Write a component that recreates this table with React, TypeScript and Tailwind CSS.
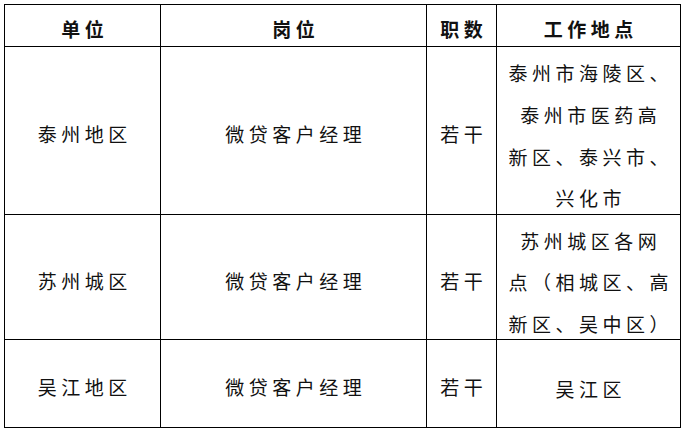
import React from 'react';

interface Row {
  unit: string;
  post: string;
  count: string;
  places: string[];
  height: string;
}

const rows: Row[] = [
  {
    unit: '泰州地区',
    post: '微贷客户经理',
    count: '若干',
    places: ['泰州市海陵区、', '泰州市医药高', '新区、泰兴市、', '兴化市'],
    height: 'h-[168px]',
  },
  {
    unit: '苏州城区',
    post: '微贷客户经理',
    count: '若干',
    places: ['苏州城区各网', '点（相城区、高', '新区、吴中区）'],
    height: 'h-[125px]',
  },
  {
    unit: '吴江地区',
    post: '微贷客户经理',
    count: '若干',
    places: ['吴江区'],
    height: 'h-[88px]',
  },
];

const cell = 'flex items-center justify-center border-r border-b border-black';

const App: React.FC = () => {
  return (
    <div className="min-h-screen bg-white pl-[4px] pt-[4px] text-[#111] [font-family:'Noto_Sans_CJK_SC',sans-serif]">
      <div className="grid w-[677px] grid-cols-[156px_266px_70px_184px] border-l border-t border-black text-[19px] tracking-[4.5px]">
        {/* Header */}
        <div className={`${cell} h-[42px] font-bold`}>
          <span className="translate-y-1 pl-[4.5px]">单位</span>
        </div>
        <div className={`${cell} h-[42px] font-bold`}>
          <span className="translate-y-1 pl-[4.5px]">岗位</span>
        </div>
        <div className={`${cell} h-[42px] font-bold`}>
          <span className="translate-y-1 pl-[4.5px]">职数</span>
        </div>
        <div className={`${cell} h-[42px] font-bold`}>
          <span className="translate-y-1 pl-[4.5px]">工作地点</span>
        </div>

        {rows.map((row) => (
          <React.Fragment key={row.unit}>
            <div className={`${cell} ${row.height}`}>
              <span className="translate-y-1 pl-[4.5px]">{row.unit}</span>
            </div>
            <div className={`${cell} ${row.height}`}>
              <span className="translate-y-1 pl-[4.5px]">{row.post}</span>
            </div>
            <div className={`${cell} ${row.height}`}>
              <span className="translate-y-1 pl-[4.5px]">{row.count}</span>
            </div>
            <div className={`${cell} ${row.height}`}>
              <div className="flex translate-y-[5px] flex-col items-center pl-[4.5px] leading-[41.6px]">
                {row.places.map((line) => (
                  <span key={line} className="whitespace-nowrap">
                    {line}
                  </span>
                ))}
              </div>
            </div>
          </React.Fragment>
        ))}
      </div>
    </div>
  );
};

export default App;
